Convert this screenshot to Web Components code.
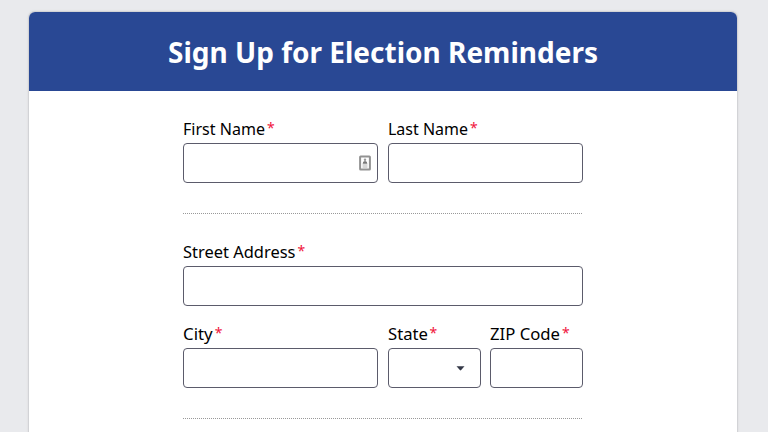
<!DOCTYPE html>
<html lang="en">
<head>
<meta charset="utf-8">
<title>Election Reminders</title>
<style>
html,body{margin:0;height:432px;overflow:hidden;background:#e9eaed}
body{font-family:"Noto Sans","Open Sans",sans-serif;color:#000}
</style>
</head>
<body>
<signup-card heading="Sign Up for Election Reminders">
  <form-row columns="195px 195px">
    <form-field label="First Name" fit="82"><contact-icon></contact-icon></form-field>
    <form-field label="Last Name" fit="80"></form-field>
  </form-row>
  <form-divider></form-divider>
  <form-row columns="400px">
    <form-field label="Street Address" fit="112.5"></form-field>
  </form-row>
  <form-row columns="195px 93px 93px">
    <form-field label="City" fit="29.7"></form-field>
    <form-field label="State" fit="40"><select-caret></select-caret></form-field>
    <form-field label="ZIP Code" fit="70"></form-field>
  </form-row>
  <form-divider></form-divider>
</signup-card>
<script>
// Text condensed horizontally to a given width, keeping its height.
class FitText extends HTMLElement{
  connectedCallback(){
    const root=this.attachShadow({mode:'open'});
    root.innerHTML='<style>:host{display:block;flex:none;white-space:nowrap}span{display:inline-block;transform-origin:0 50%}</style><span></span>';
    const span=root.querySelector('span'),width=+this.getAttribute('width');
    span.textContent=this.getAttribute('text');
    this.style.width=width+'px';
    span.style.transform=`scaleX(${width/span.getBoundingClientRect().width})`;
  }
}
customElements.define('fit-text',FitText);

customElements.define('signup-card',class extends HTMLElement{
  connectedCallback(){
    this.attachShadow({mode:'open'}).innerHTML=`<style>
      :host{display:block;box-sizing:border-box;width:708px;margin:12px 0 0 29px;height:440px;background:#fff;border-radius:6px 6px 0 0;box-shadow:0 0 0 1px #d2d3d6,0 0 2px 1px #d5d6d9}
      header{height:79px;background:#294894;color:#fff;border-radius:6px 6px 0 0;display:flex;justify-content:center;align-items:center;font:700 28.4px/40px "Noto Sans",sans-serif}
      main{width:400px;margin-left:154px;padding-top:27px}
    </style><header><fit-text text="${this.getAttribute('heading')}" width="430"></fit-text></header><main><slot></slot></main>`;
  }
});

customElements.define('form-row',class extends HTMLElement{
  connectedCallback(){
    this.attachShadow({mode:'open'}).innerHTML=`<style>
      :host{display:grid;grid-template-columns:${this.getAttribute('columns')};justify-content:space-between;height:65px;margin-bottom:17px}
    </style><slot></slot>`;
  }
});

customElements.define('form-field',class extends HTMLElement{
  connectedCallback(){
    this.attachShadow({mode:'open'}).innerHTML=`<style>
      :host{display:block}
      .label{display:flex;height:25px;font-size:16px;line-height:22px}
      .required{color:#f0143c;font-size:14px;line-height:20px;margin-left:2px}
      .box{display:flex;align-items:center;justify-content:flex-end;box-sizing:border-box;height:40px;border:1px solid #5b5b6b;border-radius:4px;background:#fff}
    </style><div class="label"><fit-text text="${this.getAttribute('label')}" width="${this.getAttribute('fit')}"></fit-text><span class="required">*</span></div><div class="box"><slot></slot></div>`;
  }
});

customElements.define('form-divider',class extends HTMLElement{
  connectedCallback(){
    this.attachShadow({mode:'open'}).innerHTML='<style>:host{display:block;height:1px;margin:30px 0 27px;background:repeating-linear-gradient(90deg,#999 0 1px,#fff 1px 2px)}</style>';
  }
});

customElements.define('contact-icon',class extends HTMLElement{
  connectedCallback(){
    this.attachShadow({mode:'open'}).innerHTML=`<style>:host{display:block;height:16px;margin-right:6px}svg{display:block}</style>
    <svg width="12" height="16"><rect x="1.1" y="1.4" width="9.8" height="13.2" rx=".5" fill="#fff" stroke="#929292" stroke-width="2"/><circle cx="6" cy="4.8" r="1.2" fill="#999"/><path d="M3.6 8.7Q3.8 6 6 6T8.4 8.7Z" fill="#777"/><path d="M3.5 10h5M3.5 12h5" stroke="#b0b0b0" stroke-width="1.2"/></svg>`;
  }
});

customElements.define('select-caret',class extends HTMLElement{
  connectedCallback(){
    this.attachShadow({mode:'open'}).innerHTML=`<style>:host{display:block;margin-right:15px}svg{display:block}</style>
    <svg width="9" height="6"><path d="M.5 1.2h8L5.2 5.1q-.7.6-1.4 0z" fill="#343847"/></svg>`;
  }
});
</script>
</body>
</html>
